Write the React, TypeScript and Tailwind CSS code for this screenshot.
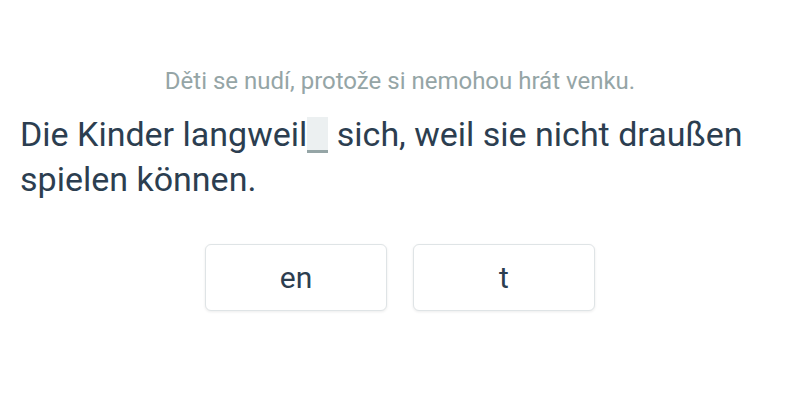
export default function App() {
  return (
    <div className="w-[800px] h-[400px] bg-white font-['Roboto',sans-serif] text-[#2c3e50] flex flex-col px-5 pt-[65px]">
      <p className="text-center text-[24px] leading-8 text-[#95a5a6]">
        Děti se nudí, protože si nemohou hrát venku.
      </p>
      <p className="mt-[15px] text-[34px] leading-[45px]">
        Die Kinder langweil
        <span className="inline-block align-[-7px] w-[21px] h-9 bg-[#ecf0f1] border-b-[3px] border-[#95a5a6]" />{" "}
        sich, weil sie nicht draußen spielen können.
      </p>
      <div className="mt-[42px] flex justify-center gap-[26px]">
        <button className="w-[182px] h-[67px] rounded-md border border-[#dfe4e6] bg-white shadow-[0_1px_3px_rgba(0,0,0,0.08)] text-[30px] text-[#2c3e50]">
          en
        </button>
        <button className="w-[182px] h-[67px] rounded-md border border-[#dfe4e6] bg-white shadow-[0_1px_3px_rgba(0,0,0,0.08)] text-[30px] text-[#2c3e50]">
          t
        </button>
      </div>
    </div>
  );
}
